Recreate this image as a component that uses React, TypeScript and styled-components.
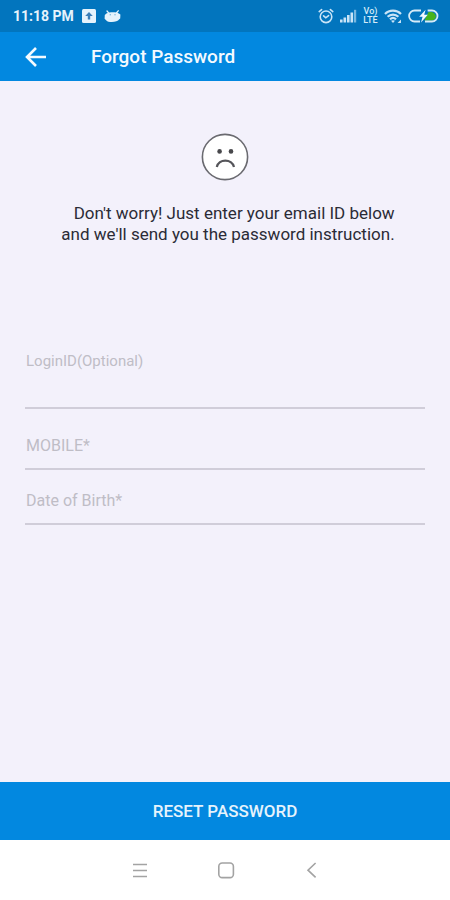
import React from "react";
import styled, { createGlobalStyle } from "styled-components";

const GlobalStyle = createGlobalStyle`
  *, *::before, *::after { box-sizing: border-box; }
  body { margin: 0; font-family: Roboto, "Liberation Sans", sans-serif; background: #f3f1fb; }
`;

const Screen = styled.div`
  display: flex;
  flex-direction: column;
  min-height: 100vh;
  background: #f3f1fb;
`;

const StatusBar = styled.div`
  display: flex;
  align-items: center;
  justify-content: space-between;
  height: 32px;
  padding: 0 11px 0 13px;
  background: #0275be;
  color: #e6f3fc;
`;

const StatusGroup = styled.div<{ $gap: number }>`
  display: flex;
  align-items: center;
  gap: ${(p) => p.$gap}px;

  svg { display: block; }
`;

const Clock = styled.span`
  font-size: 14px;
  line-height: 16px;
  font-weight: 700;
`;

const Header = styled.header`
  display: flex;
  align-items: center;
  gap: 42px;
  height: 49px;
  padding: 0 23px;
  background: #0288e0;
  color: #f4faff;
`;

const IconButton = styled.button`
  display: flex;
  padding: 0;
  border: 0;
  background: none;
  color: inherit;
  cursor: pointer;
`;

const Title = styled.h1`
  margin: 0;
  font-size: 19px;
  line-height: 24px;
  font-weight: 500;
`;

const Main = styled.main`
  flex: 1;
  display: flex;
  flex-direction: column;
  padding: 52px 25px 24px;
`;

const Face = styled.svg`
  display: block;
  align-self: center;
`;

const Message = styled.p`
  align-self: center;
  margin: 22px 0 0;
  padding-left: 6px;
  font-size: 17px;
  line-height: 21px;
  text-align: right;
  color: #2b2b36;
`;

const Form = styled.form`
  display: flex;
  flex-direction: column;
  margin-top: 106px;
`;

const Field = styled.div<{ $height: number }>`
  display: flex;
  flex-direction: column;
  justify-content: space-between;
  height: ${(p) => p.$height}px;
  padding: 0 1px;
  border-bottom: 2px solid #d0cdd9;
`;

const Label = styled.label`
  font-size: 15px;
  line-height: 20px;
  color: #bfbdc6;
`;

const Input = styled.input`
  width: 100%;
  min-width: 0;
  margin-top: auto;
  padding: 0 0 12px;
  border: 0;
  outline: 0;
  background: none;
  font-family: inherit;
  font-size: 16px;
  line-height: 20px;
  color: #2b2b36;

  &::placeholder { color: #bfbdc6; opacity: 1; }
`;

const ResetButton = styled.button`
  height: 58px;
  border: 0;
  background: #0288e0;
  color: #e6f3fc;
  font-family: inherit;
  font-size: 17px;
  line-height: 24px;
  font-weight: 500;
  cursor: pointer;
`;

const NavBar = styled.nav`
  display: flex;
  align-items: center;
  justify-content: center;
  gap: 66px;
  height: 60px;
  padding-left: 2px;
  background: #ffffff;
  color: #a3a3a3;
`;

const UploadIcon = () => (
  <svg width="14" height="14" viewBox="0 0 14 14" aria-hidden="true">
    <rect width="14" height="14" rx="1.5" fill="#e6f3fc" />
    <path d="M7 3 L10.8 6.9 H8.2 V10.4 H5.8 V6.9 H3.2 Z" fill="#3d7fb8" />
  </svg>
);

const RobotIcon = () => (
  <svg width="17" height="13" viewBox="0 0 17 13" aria-hidden="true">
    <path d="M3 1 L5 3.4 M14.2 0.8 L12.4 3" stroke="#e6f3fc" strokeWidth="1.3" strokeLinecap="round" />
    <path d="M2.4 3.6 C5 2 12 2 14.4 3.2 L16.4 4.4 L16.2 8.6 L15 9.6 C13.8 12.4 4 12.8 2.4 10.4 L0.6 8.8 L0.8 5 Z" fill="#e6f3fc" />
    <circle cx="6.2" cy="4.8" r="0.5" fill="#0275be" />
    <circle cx="11" cy="4.8" r="0.5" fill="#0275be" />
  </svg>
);

const AlarmIcon = () => (
  <svg width="16" height="16" viewBox="0 0 16 16" fill="none" stroke="#c9e4f7" strokeWidth="1.6" strokeLinecap="round" aria-hidden="true">
    <circle cx="8" cy="8.8" r="5.8" />
    <path d="M1.2 3.6 L3.6 1.6 M14.8 3.6 L12.4 1.6 M5.6 7.8 L7.8 9.8 L10.6 7.6" />
  </svg>
);

const SignalIcon = () => (
  <svg width="17" height="14" viewBox="0 0 17 14" fill="#c9e4f7" aria-hidden="true">
    <rect x="0" y="10.5" width="2.6" height="3" />
    <rect x="3.5" y="8.5" width="2.6" height="5" />
    <rect x="7" y="6" width="2.6" height="7.5" />
    <rect x="10.5" y="3.5" width="2.6" height="10" />
    <rect x="14" y="0.8" width="2.2" height="12.7" opacity="0.6" />
  </svg>
);

const VolteBadge = styled.span`
  display: grid;
  grid-template-rows: 9px 9px;
  justify-items: center;
  width: 15px;
  font-size: 9px;
  line-height: 9px;
  font-weight: 500;
  color: #d6ebf8;
`;

const WifiIcon = () => (
  <svg width="18" height="15" viewBox="0 0 18 15" fill="none" stroke="#c9e4f7" strokeWidth="2.2" aria-hidden="true">
    <path d="M1 5 C5.2 0.6 12.8 0.6 17 5" />
    <path d="M3.6 7.8 C6.6 4.8 11.4 4.8 14.4 7.8" />
    <path d="M6 10.4 C7.8 8.6 10.2 8.6 12 10.4" />
    <path d="M9 14 L7 11.8 C8.2 10.9 9.8 10.9 11 11.8 Z" fill="#c9e4f7" stroke="none" />
    <path d="M17 10.5 V14 H13.5 Z" fill="#c9e4f7" stroke="none" />
  </svg>
);

const BatteryIcon = () => (
  <svg width="31" height="14" viewBox="0 0 31 14" aria-hidden="true">
    <path d="M20.5 3 H23.5 C26 3.4 27.4 5 28 7.4 C27.4 10 26 11.2 23.6 11.4 H16.4 Z" fill="#48b31c" />
    <path d="M13 1.5 H6.6 a5.5 5.5 0 0 0 0 11 H12 M19.6 1.5 H24 a5.5 5.5 0 0 1 0 11 H17" fill="none" stroke="#d6ebf8" strokeWidth="1.8" />
    <path d="M17.6 0.8 L11.2 7.8 H14.6 L13 13.4 L19.8 5.8 H16.2 Z" fill="#f2faff" />
  </svg>
);

export default function App() {
  return (
    <>
      <GlobalStyle />
      <Screen>
        <StatusBar>
          <StatusGroup $gap={8}>
            <Clock>11:18 PM</Clock>
            <UploadIcon />
            <RobotIcon />
          </StatusGroup>
          <StatusGroup $gap={6}>
            <AlarmIcon />
            <SignalIcon />
            <VolteBadge>
              <span>Vo)</span>
              <span>LTE</span>
            </VolteBadge>
            <WifiIcon />
            <BatteryIcon />
          </StatusGroup>
        </StatusBar>

        <Header>
          <IconButton type="button" aria-label="Back">
            <svg width="26" height="24" viewBox="0 0 26 24" fill="none" stroke="currentColor" strokeWidth="2.6" aria-hidden="true">
              <path d="M23 12 H4.5 M13 3 L4 12 L13 21" />
            </svg>
          </IconButton>
          <Title>Forgot Password</Title>
        </Header>

        <Main>
          <Face width="48" height="48" viewBox="0 0 48 48" role="img" aria-label="Sad face">
            <circle cx="24" cy="24" r="22.6" fill="#ffffff" stroke="#6a6a70" strokeWidth="1.6" />
            <circle cx="18.6" cy="18.4" r="2.3" fill="#48484c" />
            <circle cx="30" cy="18.4" r="2.3" fill="#48484c" />
            <path d="M15.8 34 C17.6 25.4 31 25.4 33 34" fill="none" stroke="#55555a" strokeWidth="2.2" />
          </Face>
          <Message>
            Don't worry! Just enter your email ID below
            <br />
            and we'll send you the password instruction.
          </Message>

          <Form id="reset-form" onSubmit={(e) => e.preventDefault()}>
            <Field $height={58}>
              <Label htmlFor="login-id">LoginID(Optional)</Label>
              <Input id="login-id" type="text" />
            </Field>
            <Field $height={61}>
              <Input type="tel" aria-label="Mobile" placeholder="MOBILE*" />
            </Field>
            <Field $height={55}>
              <Input type="text" aria-label="Date of Birth" placeholder="Date of Birth*" />
            </Field>
          </Form>
        </Main>

        <ResetButton type="submit" form="reset-form">RESET PASSWORD</ResetButton>

        <NavBar>
          <IconButton type="button" aria-label="Recent apps">
            <svg width="20" height="20" viewBox="0 0 20 20" fill="none" stroke="currentColor" strokeWidth="1.4" aria-hidden="true">
              <path d="M3 4.5 H17 M3 10.5 H17 M3 16.5 H17" />
            </svg>
          </IconButton>
          <IconButton type="button" aria-label="Home">
            <svg width="20" height="20" viewBox="0 0 20 20" fill="none" stroke="currentColor" strokeWidth="1.6" aria-hidden="true">
              <rect x="2.8" y="3" width="14.6" height="14.6" rx="3.4" />
            </svg>
          </IconButton>
          <IconButton type="button" aria-label="Back">
            <svg width="20" height="20" viewBox="0 0 20 20" fill="none" stroke="currentColor" strokeWidth="1.6" aria-hidden="true">
              <path d="M13.6 3 L6 10.2 L13.6 17.4" />
            </svg>
          </IconButton>
        </NavBar>
      </Screen>
    </>
  );
}
